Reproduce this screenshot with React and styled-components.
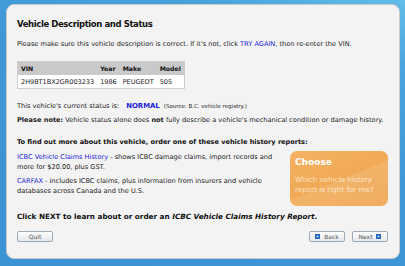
import React from 'react';
import styled, { createGlobalStyle } from 'styled-components';

const Global = createGlobalStyle`
  html, body {
    margin: 0;
    padding: 0;
  }
  body {
    width: 405px;
    height: 266px;
    overflow: hidden;
    background: linear-gradient(200deg, #62bde9 0%, #4aa2dd 18%, #3f97d6 45%, #3b93d3 100%);
    font-family: "DejaVu Sans", Verdana, sans-serif;
  }
`;

const Page = styled.div`
  padding: 4px 5px 7px 6px;
  height: 266px;
  box-sizing: border-box;
`;

const Panel = styled.div`
  height: 100%;
  box-sizing: border-box;
  background: #f3f3f3;
  border: 1px solid #c9c9c9;
  border-radius: 8px;
  padding: 13px 10px 0 10px;
  color: #222;
  font-size: 6.6px;
`;

const Title = styled.h1`
  margin: 0 0 9px 0;
  font-size: 8.5px;
  letter-spacing: -0.4px;
  line-height: 12px;
  font-weight: bold;
  color: #111;
`;

const Para = styled.p`
  margin: 0 0 ${p => p.$gap || 0}px 0;
  line-height: 10px;
  font-size: 6.6px;
  color: #222;
`;

const Link = styled.span`
  color: #2222dd;
`;

const Table = styled.table`
  border-collapse: collapse;
  border: 1px solid #cfcfcf;
  background: #fff;
  margin: 12px 0 12px 0;
  font-size: 6.5px;
  th {
    background: #c9c9c9;
    text-align: left;
    font-weight: bold;
    font-size: 6.2px;
    padding: 0 3px;
    height: 13px;
    color: #111;
  }
  td {
    padding: 0 3px;
    height: 13px;
    color: #222;
  }
`;

const Status = styled.span`
  color: #1a1add;
  font-weight: bold;
  font-size: 6.9px;
  margin: 0 4px 0 5px;
`;

const Source = styled.span`
  font-size: 5.5px;
`;

const Subhead = styled.h2`
  margin: 12px 0 4px 0;
  font-size: 6.55px;
  font-weight: bold;
  line-height: 10px;
  color: #111;
`;

const Reports = styled.div`
  display: flex;
  align-items: flex-start;
  justify-content: space-between;
`;

const ReportList = styled.div`
  width: 266px;
  padding-top: 1px;
  display: flex;
  flex-direction: column;
  gap: 4px;
`;

const ChooseBox = styled.div`
  position: relative;
  overflow: hidden;
  width: 98px;
  height: 55px;
  margin-right: 1px;
  box-sizing: border-box;
  padding: 5px 5px;
  border-radius: 7px;
  background: linear-gradient(160deg, #f4b262 0%, #eea14a 100%);
  &::after {
    content: '';
    position: absolute;
    left: -20px;
    top: 24px;
    width: 180px;
    height: 80px;
    background: rgba(255, 255, 255, 0.12);
    transform: rotate(-22deg);
  }
`;

const ChooseTitle = styled.div`
  color: #fff;
  font-weight: bold;
  font-size: 9px;
  line-height: 12px;
  margin-bottom: 7px;
`;

const ChooseText = styled.div`
  color: #fde2c2;
  font-size: 7.2px;
  line-height: 10px;
`;

const NextLine = styled.p`
  margin: 6px 0 9px 0;
  font-size: 7.25px;
  line-height: 10px;
  font-weight: bold;
  color: #111;
  em {
    font-style: italic;
  }
`;

const ButtonRow = styled.div`
  display: flex;
  justify-content: space-between;
  padding-right: 1px;
`;

const Group = styled.div`
  display: flex;
  gap: 7px;
`;

const Button = styled.button`
  display: flex;
  align-items: center;
  justify-content: center;
  gap: 4px;
  width: ${p => p.$w || 36}px;
  height: 11px;
  padding: 0;
  font-family: "DejaVu Sans", Verdana, sans-serif;
  font-size: 6px;
  color: #555;
  background: linear-gradient(#fdfdfd, #e4e8ec);
  border: 1px solid #9eaab6;
  border-radius: 2px;
`;

const Arrow = styled.span`
  width: 5px;
  height: 5px;
  background: #3d7fd6;
  border: 1px solid #2b63b8;
  box-sizing: border-box;
  position: relative;
  &::after {
    content: '';
    position: absolute;
    left: 1px;
    top: 1px;
    width: 1px;
    height: 1px;
    background: #fff;
  }
`;

export default function App() {
  return (
    <Page>
      <Global />
      <Panel>
        <Title>Vehicle Description and Status</Title>
        <Para>
          Please make sure this vehicle description is correct. If it's not, click <Link>TRY AGAIN</Link>, then re-enter the VIN.
        </Para>
        <Table>
          <thead>
            <tr>
              <th>VIN</th>
              <th>Year</th>
              <th>Make</th>
              <th>Model</th>
            </tr>
          </thead>
          <tbody>
            <tr>
              <td>2H9BT1BX2GR003233</td>
              <td>1986</td>
              <td>PEUGEOT</td>
              <td>505</td>
            </tr>
          </tbody>
        </Table>
        <Para $gap={4}>
          This vehicle's current status is: <Status>NORMAL</Status><Source>(Source: B.C. vehicle registry.)</Source>
        </Para>
        <Para>
          <b>Please note:</b> Vehicle status alone does <b>not</b> fully describe a vehicle's mechanical condition or damage history.
        </Para>
        <Subhead>To find out more about this vehicle, order one of these vehicle history reports:</Subhead>
        <Reports>
          <ReportList>
            <Para>
              <Link>ICBC Vehicle Claims History</Link> - shows ICBC damage claims, import records and more for $20.00, plus GST.
            </Para>
            <Para>
              <Link>CARFAX</Link> - includes ICBC claims, plus information from insurers and vehicle databases across Canada and the U.S.
            </Para>
          </ReportList>
          <ChooseBox>
            <ChooseTitle>Choose</ChooseTitle>
            <ChooseText>Which vehicle history report is right for me?</ChooseText>
          </ChooseBox>
        </Reports>
        <NextLine>
          Click NEXT to learn about or order an <em>ICBC Vehicle Claims History Report</em>.
        </NextLine>
        <ButtonRow>
          <Button $w={36}>Quit</Button>
          <Group>
            <Button $w={36}><Arrow />Back</Button>
            <Button $w={36}>Next<Arrow /></Button>
          </Group>
        </ButtonRow>
      </Panel>
    </Page>
  );
}
